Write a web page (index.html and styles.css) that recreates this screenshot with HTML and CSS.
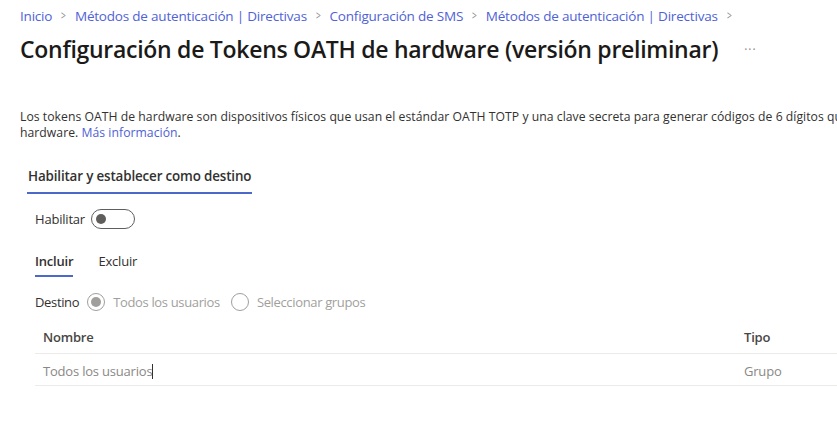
FILE: index.html
```html
<!DOCTYPE html>
<html lang="es">
<head>
<meta charset="utf-8">
<title>Configuración de Tokens OATH de hardware</title>
<link rel="stylesheet" href="styles.css">
</head>
<body>
<div class="page">
  <nav class="breadcrumb">
    <a href="#">Inicio</a><span class="sep">&gt;</span>
    <a href="#">Métodos de autenticación | Directivas</a><span class="sep">&gt;</span>
    <a href="#">Configuración de SMS</a><span class="sep">&gt;</span>
    <a href="#">Métodos de autenticación | Directivas</a><span class="sep">&gt;</span>
  </nav>
  <header class="title-row">
    <h1>Configuración de Tokens OATH de hardware (versión preliminar)</h1>
    <span class="more">···</span>
  </header>
  <p class="desc"><span class="nowrap">Los tokens OATH de hardware son dispositivos físicos que usan el estándar OATH TOTP y una clave secreta para generar códigos de 6 dígitos que se usan para iniciar sesión con un token de</span><br>hardware. <a href="#">Más información</a>.</p>

  <div class="main-tabs">
    <span class="main-tab active">Habilitar y establecer como destino</span>
  </div>

  <div class="section">
    <div class="enable-row">
      <span>Habilitar</span>
      <span class="toggle"><span class="knob"></span></span>
    </div>

    <div class="sub-tabs">
      <span class="sub-tab active">Incluir</span>
      <span class="sub-tab">Excluir</span>
    </div>

    <div class="target-row">
      <span class="target-label">Destino</span>
      <span class="radio checked"><span class="dot"></span></span>
      <span class="radio-label">Todos los usuarios</span>
      <span class="radio"></span>
      <span class="radio-label">Seleccionar grupos</span>
    </div>

    <div class="table">
      <div class="th">Nombre</div>
      <div class="th">Tipo</div>
      <div class="td">Todos los usuarios<span class="caret"></span></div>
      <div class="td">Grupo</div>
    </div>
  </div>
</div>
</body>
</html>
```
FILE: styles.css
```css
html, body {
  margin: 0;
  padding: 0;
  background: #ffffff;
  overflow: hidden;
}
body {
  font-family: "Open Sans", "Noto Sans", sans-serif;
  color: #323130;
  font-size: 13px;
}
.page {
  width: 1100px;
  padding: 6px 0 0 20px;
}
a {
  color: #4f62d6;
  text-decoration: none;
}
.breadcrumb {
  font-size: 13.5px;
  line-height: 20px;
  display: flex;
  align-items: center;
  letter-spacing: -0.2px;
}
.breadcrumb .sep {
  color: #8a8886;
  margin: 0 8px;
  font-size: 12px;
  transform: scaleX(0.7);
}
.title-row {
  display: flex;
  align-items: center;
  margin-top: 8px;
  height: 30px;
}
h1 {
  margin: 0;
  font-size: 23px;
  font-weight: 600;
  color: #1b1a19;
  letter-spacing: -0.28px;
}
.more {
  margin-left: 26px;
  color: #8a8886;
  font-size: 12px;
  letter-spacing: 1px;
}
.desc {
  margin: 45px 0 0 0;
  font-size: 12.2px;
  line-height: 16px;
  color: #323130;
  letter-spacing: 0.04px;
}
.nowrap { white-space: nowrap; }
.main-tabs {
  margin-top: 22px;
  display: flex;
  padding-left: 7px;
}
.main-tab {
  font-size: 13.4px;
  font-weight: 600;
  color: #323130;
  padding: 4px 1px 7px 1px;
  border-bottom: 2px solid #4a69cb;
  letter-spacing: -0.15px;
}
.section {
  padding-left: 15px;
}
.enable-row {
  display: flex;
  align-items: center;
  gap: 6px;
  margin-top: 14px;
  height: 22px;
  letter-spacing: -0.2px;
}
.toggle {
  width: 38px;
  height: 18px;
  border: 1px solid #605e5c;
  border-radius: 10px;
  display: flex;
  align-items: center;
  padding-left: 4px;
  box-sizing: content-box;
}
.toggle .knob {
  width: 10px;
  height: 10px;
  border-radius: 50%;
  background: #605e5c;
}
.sub-tabs {
  display: flex;
  gap: 25px;
  margin-top: 20px;
}
.sub-tab {
  font-size: 13px;
  padding: 2px 0 5px 0;
  color: #323130;
  letter-spacing: -0.2px;
}
.sub-tab.active {
  font-weight: 600;
  border-bottom: 2px solid #4a69cb;
}
.target-row {
  display: flex;
  align-items: center;
  margin-top: 14px;
  height: 22px;
  letter-spacing: -0.35px;
}
.target-label { margin-right: 8px; }
.radio {
  width: 16px;
  height: 16px;
  border: 1px solid #a19f9d;
  border-radius: 50%;
  display: flex;
  align-items: center;
  justify-content: center;
  margin-right: 8px;
}
.radio .dot {
  width: 10px;
  height: 10px;
  border-radius: 50%;
  background: #a19f9d;
}
.radio-label {
  color: #a19f9d;
  margin-right: 11px;
}
.table {
  margin-top: 7px;
  display: grid;
  grid-template-columns: 701px 400px;
}
.th {
  font-weight: 600;
  color: #484644;
  padding: 8px 8px 0 8px;
  height: 25px;
  border-bottom: 1px solid #edebe9;
  letter-spacing: -0.2px;
}
.td {
  color: #8a8886;
  padding: 8px 8px 0 8px;
  height: 23px;
  border-bottom: 1px solid #edebe9;
  letter-spacing: -0.2px;
}
.caret {
  display: inline-block;
  width: 1px;
  height: 15px;
  background: #323130;
  vertical-align: -3px;
}
```
